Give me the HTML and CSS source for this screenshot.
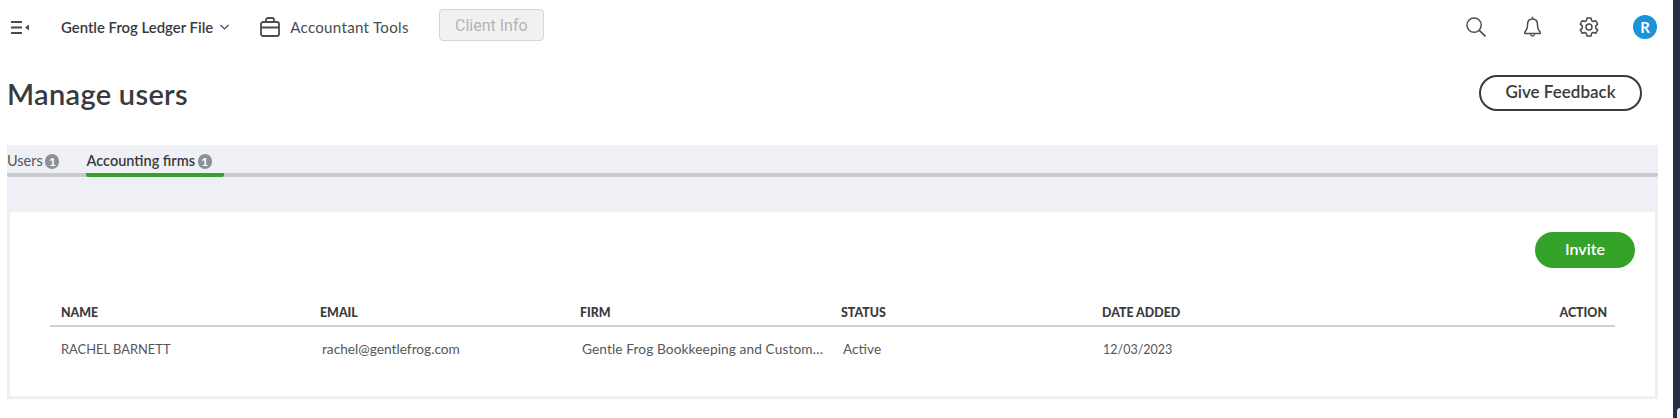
FILE: index.html
```html
<!DOCTYPE html>
<html lang="en">
<head>
<meta charset="utf-8">
<title>Manage users</title>
<link rel="stylesheet" href="styles.css">
</head>
<body>
<div class="page">
  <main class="main">
    <header class="topbar">
      <svg class="menu-icon" width="18" height="13" viewBox="0 0 18 13"><path d="M0 1h11M0 6.500h11M0 12h11" stroke="#4a4b4e" stroke-width="2" fill="none"/><path d="M18 3.500v6l-4-3z" fill="#4a4b4e"/></svg>
      <div class="company">Gentle Frog Ledger File</div>
      <svg class="chevron" width="9" height="6" viewBox="0 0 9 6"><path d="M.5 1l4 4 4-4" stroke="#4a4b4e" stroke-width="1.200" fill="none"/></svg>
      <svg class="case" width="20" height="20" viewBox="0 0 20 20"><path d="M3 5h14a2 2 0 0 1 2 2v10a2 2 0 0 1-2 2H3a2 2 0 0 1-2-2V7a2 2 0 0 1 2-2zM1 10.500h18M6 5V3a2 2 0 0 1 2-2h4a2 2 0 0 1 2 2v2" stroke="#4a4b4e" stroke-width="1.800" fill="none"/></svg>
      <div class="tools">Accountant Tools</div>
      <button class="client">Client Info</button>
      <div class="actions">
        <svg class="search" width="20" height="20" viewBox="0 0 21 21"><circle cx="8.500" cy="8.500" r="7.500" stroke="#4a4b4e" stroke-width="1.500" fill="none"/><path d="M14 14l6.500 6.500" stroke="#4a4b4e" stroke-width="1.700" fill="none"/></svg>
        <svg class="bell" width="17" height="22" viewBox="0 0 17 22"><path d="M8.500 3c-3.300 0-5 2.500-5 5.500 0 4-1 6-2.700 7.500-.5.500-.2 1.500.6 1.500h14.200c.8 0 1.100-1 .6-1.500C14.500 14.500 13.500 12.500 13.500 8.500 13.500 5.500 11.800 3 8.500 3zM8.500 3V.8M6.500 18.500c.3 2 3.700 2 4 0" stroke="#4a4b4e" stroke-width="1.500" fill="none"/></svg>
        <svg class="gear" width="20" height="20" viewBox="0 0 20 20"><path d="M8 1h4l.6 2.600 1.600.9 2.500-.8 2 3.400-2 1.800v2.200l2 1.800-2 3.400-2.500-.8-1.600.9L12 19H8l-.6-2.600-1.600-.9-2.500.8-2-3.400 2-1.800V8.900l-2-1.800 2-3.400 2.500.8 1.600-.9z" stroke="#4a4b4e" stroke-width="1.500" stroke-linejoin="round" fill="none"/><circle cx="10" cy="10" r="3" stroke="#4a4b4e" stroke-width="1.500" fill="none"/></svg>
        <div class="avatar">R</div>
      </div>
    </header>

    <div class="title-row">
      <h1 class="title">Manage users</h1>
      <button class="feedback">Give Feedback</button>
    </div>

    <section class="panel">
      <nav class="tabs">
        <div class="tab">Users <span class="badge">1</span></div>
        <div class="tab tab-active">Accounting firms <span class="badge">1</span></div>
      </nav>
      <div class="card">
        <div class="card-actions"><button class="invite">Invite</button></div>
        <table class="users">
          <thead>
            <tr><th class="c1">NAME</th><th class="c2">EMAIL</th><th class="c3">FIRM</th><th class="c4">STATUS</th><th class="c5">DATE ADDED</th><th class="c6">ACTION</th></tr>
          </thead>
          <tbody>
            <tr><td class="name">RACHEL BARNETT</td><td class="nudge">rachel@gentlefrog.com</td><td class="nudge"><div class="clip">Gentle Frog Bookkeeping and Customer Services</div></td><td class="nudge">Active</td><td class="nudge date">12/03/2023</td><td></td></tr>
          </tbody>
        </table>
      </div>
    </section>
  </main>
  <aside class="strip"><div class="strip-corner"></div></aside>
</div>
</body>
</html>
```
FILE: styles.css
```css
* { box-sizing: border-box; }
html, body { margin: 0; height: 100%; background: #fff; overflow: hidden; }
body { font-family: Lato, "Open Sans", sans-serif; color: #393a3d; }
button { font-family: inherit; }
.page { display: flex; height: 418px; }
.main { flex: 1; min-width: 0; padding-right: 15px; }
.strip { width: 7px; background: #232f45; display: flex; justify-content: flex-end; align-items: flex-end; }
.strip-corner { width: 3px; height: 10px; background: #dfe3ea; border-radius: 3px 0 0 0; }

.topbar { display: flex; align-items: center; height: 54px; padding-left: 11px; }
.menu-icon { margin-right: 32px; }
.company { font-size: 14.900px; font-weight: 600; color: #393a3d; }
.chevron { margin: 0 0 0 7px; }
.case { margin-left: 31px; }
.tools { font-size: 15.100px; margin-left: 10px; color: #4a4b4e; letter-spacing: .3px; }
.client { width: 105px; height: 32px; margin: -4px 0 0 30px; padding: 0; font-family: Roboto, sans-serif; font-size: 16px; color: #b4b4b4; background: #f1f1f1; border: 1px solid #d6d6d6; border-radius: 4px; }
.actions { display: flex; align-items: center; margin-left: auto; margin-right: 1px; }
.search { margin-right: 38px; }
.bell { margin-right: 38px; }
.gear { margin-right: 34px; }
.avatar { width: 24px; height: 24px; border-radius: 50%; background: #1a93d9; color: #fff; font-size: 15px; font-weight: 700; display: flex; align-items: center; justify-content: center; }

.title-row { display: flex; align-items: center; justify-content: space-between; height: 91px; padding: 0 16px 13px 7px; }
.title { margin: 0; font-size: 29px; font-weight: 600; color: #393a3d; letter-spacing: .3px; }
.feedback { width: 163px; height: 36px; margin-top: -1px; background: #fff; border: 2px solid #393a3d; border-radius: 18px; font-size: 17px; font-weight: 600; color: #393a3d; padding: 0 0 2px; }

.panel { margin-left: 7px; background: #eff0f5; height: 254px; display: flex; flex-direction: column; }
.tabs { display: flex; height: 32px; border-bottom: 4px solid #c9cbcf; border-radius: 0 0 2px 2px; gap: 27px; }
.tab { font-size: 14.500px; color: #54565a; height: 32px; padding-top: 6px; line-height: 20px; }
.tab-active { font-weight: 600; color: #393a3d; border-bottom: 4px solid #35a32a; border-radius: 2px; padding-right: 12px; }
.badge { display: inline-block; width: 14px; height: 15px; margin-left: -1px; border-radius: 7.500px; background: #8d9096; color: #fff; font-size: 12px; font-weight: 700; line-height: 15px; text-align: center; }

.card { flex: 1; margin-top: 35px; background: #fff; border: 3px solid #eff0f5; border-top: 0; padding: 20px 40px 0; }
.card-actions { display: flex; justify-content: flex-end; margin-right: -20px; }
.invite { width: 100px; height: 36px; border: 0; border-radius: 18px; background: #35a32a; color: #fff; font-size: 16px; font-weight: 600; padding: 0 0 4px; }
.users { width: 1565px; border-collapse: collapse; table-layout: fixed; margin-top: 34px; font-size: 13px; }
.users th { text-align: left; font-size: 12.400px; font-weight: 900; color: #393a3d; height: 24px; padding: 0 0 3px 11px; border-bottom: 2px solid #cfd0d2; }
.users td { padding: 12px 0 0 11px; font-size: 13.700px; color: #55575b; line-height: 20px; vertical-align: baseline; }
.users td.nudge { padding-left: 13px; }
.users td.name { font-size: 12.900px; }
.users td.date { font-size: 12.500px; padding-left: 12px; }
.c1 { width: 259px; } .c2 { width: 260px; } .c3 { width: 261px; } .c4 { width: 261px; } .c5 { width: auto; }
.users th.c6 { width: 150px; text-align: right; padding-right: 8px; }
.clip { width: 243px; white-space: nowrap; overflow: hidden; text-overflow: ellipsis; letter-spacing: .1px; }
```
